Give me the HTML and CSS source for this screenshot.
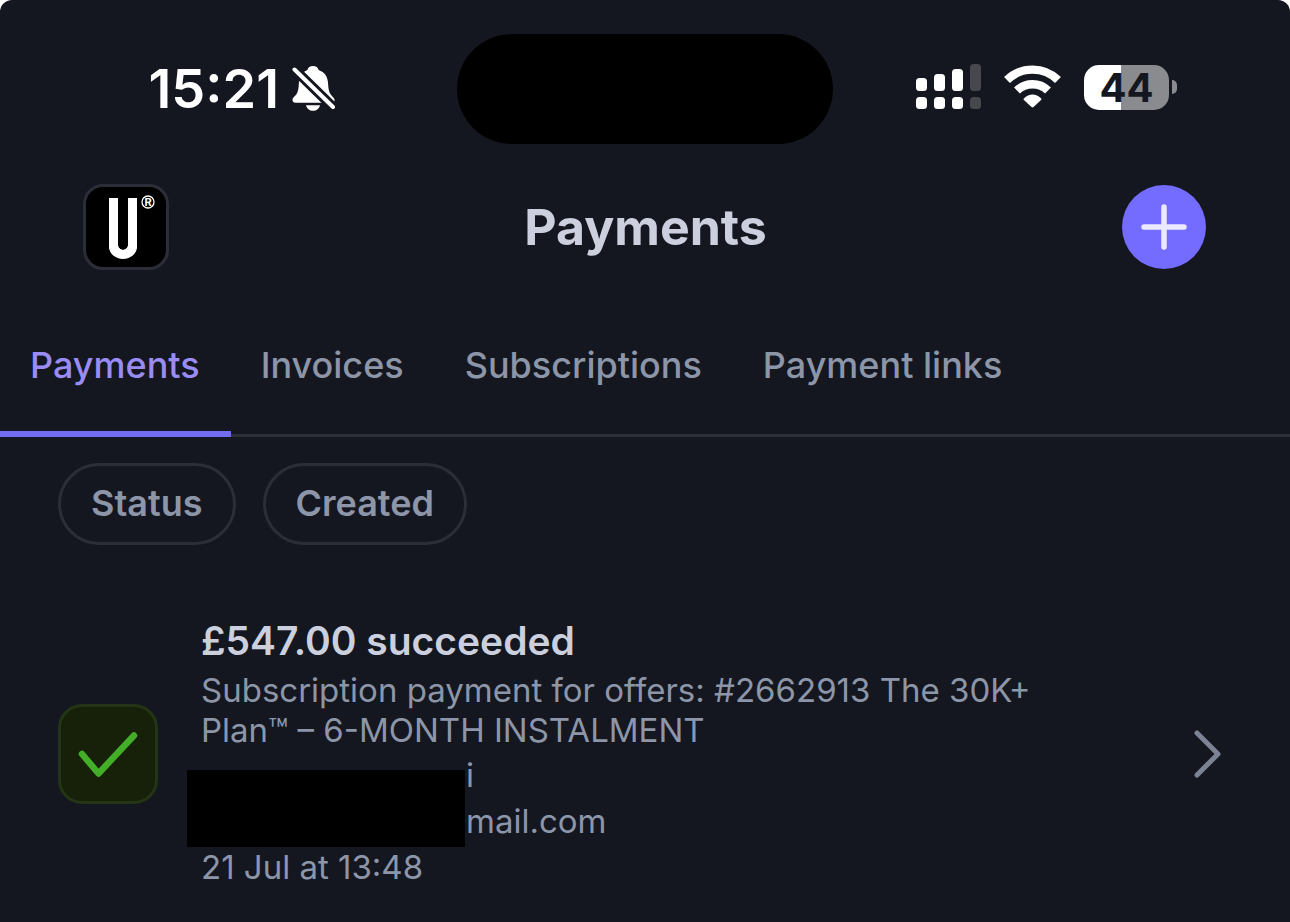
FILE: index.html
```html
<!DOCTYPE html>
<html lang="en">
<head>
<meta charset="utf-8">
<meta name="viewport" content="width=device-width, initial-scale=1">
<title>Payments</title>
<link rel="stylesheet" href="styles.css">
</head>
<body>
<div class="screen">
  <div class="status-bar">
    <div class="status-left">
      <span class="clock">15:21</span>
      <svg class="bell" width="44" height="48" viewBox="0 0 44 48" aria-label="Silent mode">
        <path fill="#fff" d="M22 1c3 0 5 1.600 5.600 4 6 2 9 6.800 9.400 12.500.4 7 1 10.500 4 13.500 1.600 1.600 2.600 2.800 2.600 4.200 0 1.600-1 2.500-2.800 2.500H4.500C2.600 37.700 1.500 36.800 1.500 35c0-1.600 1.200-2.800 2.600-4.200 3-3 3.400-6.500 3.800-13.300C8.300 11.800 11 7 16.400 5 17 2.600 19 1 22 1z"/>
        <path fill="#fff" d="M15 40.200h14c-.8 3.400-3.500 5.600-7 5.600s-6.200-2.200-7-5.600z"/>
        <path stroke="#14171f" stroke-width="10" d="M-1 0L46 46"/>
        <path stroke="#fff" stroke-width="4" stroke-linecap="round" d="M3.500 4.500L42 42"/>
      </svg>
    </div>
    <div class="island"></div>
    <div class="status-right">
      <svg width="66" height="46" viewBox="0 0 66 46" aria-label="Signal">
        <g fill="#fff">
          <rect x="0" y="14" width="11" height="13" rx="3.500"/><rect x="18" y="10" width="11" height="17" rx="3.500"/><rect x="36" y="5" width="11" height="22" rx="3.500"/>
          <rect x="0" y="33" width="11" height="12" rx="3.500"/><rect x="18" y="33" width="11" height="12" rx="3.500"/><rect x="36" y="33" width="11" height="12" rx="3.500"/>
        </g>
        <g fill="#47484d"><rect x="54" y="0" width="11" height="27" rx="3.500"/><rect x="54" y="33" width="11" height="12" rx="3.500"/></g>
      </svg>
      <svg width="58" height="46" viewBox="0 0 58 46" aria-label="Wi-Fi">
        <g fill="none" stroke="#fff" stroke-width="8.400">
          <path d="M3 16A36.500 36.500 0 0 1 54 16"/>
          <path d="M13 26.500A22.300 22.300 0 0 1 44 26.500"/>
        </g>
        <path fill="#fff" d="M19.800 34.500C25 29 32 29 37.200 34.500Q37.800 35.200 37.100 36L29.500 43Q28.500 43.800 27.500 43L19.900 36Q19.200 35.200 19.800 34.500z"/>
      </svg>
      <div class="battery"><span class="level">44</span><span class="cap"></span></div>
    </div>
  </div>

  <header class="header">
    <button class="account" aria-label="Account">
      <svg width="80" height="80" viewBox="1 1 80 80">
        <path d="M28.500 12V59a9.500 9.500 0 0 0 19 0V12" fill="none" stroke="#fff" stroke-width="9"/>
        <path d="M24 56h9v4q1 3 5 4 4-1 5-4v-4h9v5q-1 11-14 11T24 61z" fill="#fff"/>
        <circle cx="63" cy="16" r="6" fill="none" stroke="#fff" stroke-width="1.300"/>
        <text x="63" y="20" class="mark">R</text>
      </svg>
    </button>
    <h1 class="title">Payments</h1>
    <button class="add" aria-label="Create payment">
      <svg width="84" height="84" viewBox="0 0 84 84"><path d="M42 22V62M22 42H62" stroke="#ebe9ff" stroke-width="5.500" stroke-linecap="round"/></svg>
    </button>
  </header>

  <nav class="tabs">
    <a class="tab active" href="#payments">Payments</a>
    <a class="tab" href="#invoices">Invoices</a>
    <a class="tab" href="#subscriptions">Subscriptions</a>
    <a class="tab" href="#links">Payment links</a>
  </nav>

  <div class="filters">
    <button class="chip">Status</button>
    <button class="chip">Created</button>
  </div>

  <main>
    <article class="payment">
      <div class="state">
        <svg width="92" height="92" viewBox="0 0 92 92" aria-label="Succeeded"><path d="M20 46L36.500 65.500L72 27.500" fill="none" stroke="#43ae27" stroke-width="6.500" stroke-linecap="round" stroke-linejoin="round"/></svg>
      </div>
      <div class="details">
        <h2 class="amount">£547.00 succeeded</h2>
        <p class="description">Subscription payment for offers: #2662913 The 30K+ Plan™ – 6-MONTH INSTALMENT</p>
        <div class="contact">
          <p class="line masked">i</p>
          <p class="line masked">mail.com</p>
          <span class="redaction"></span>
        </div>
        <p class="line">21 Jul at 13:48</p>
      </div>
      <svg class="chevron" width="30" height="52" viewBox="0 0 30 52" aria-hidden="true"><path d="M4 5L25 26L4 47" fill="none" stroke="#7b8294" stroke-width="5" stroke-linecap="round" stroke-linejoin="round"/></svg>
    </article>
  </main>
</div>
</body>
</html>
```
FILE: styles.css
```css
* { box-sizing: border-box; }
body {
  margin: 0;
  background: #fff;
  font-family: Inter, "Liberation Sans", sans-serif;
}
h1, h2, p { margin: 0; }
button {
  font: inherit;
  padding: 0;
  cursor: pointer;
}
svg { display: block; flex: none; }
.screen {
  min-height: 100vh;
  overflow: hidden;
  background: #14171f;
  border-radius: 12px 12px 0 0;
  color: #8d95a8;
}
.status-bar {
  display: grid;
  grid-template-columns: 1fr 376px 1fr;
  align-items: center;
  padding-top: 34px;
}
.status-left {
  display: flex;
  align-items: center;
  justify-content: flex-end;
  gap: 12px;
  padding-right: 122px;
}
.clock {
  color: #fff;
  font-size: 54px;
  font-weight: 600;
  line-height: 60px;
}
.island {
  height: 110px;
  border-radius: 55px;
  background: #000;
}
.status-right {
  display: flex;
  align-items: center;
  gap: 22px;
  padding: 0 0 4px 83px;
}
.battery {
  display: flex;
  align-items: center;
  gap: 3px;
}
.level {
  width: 85px;
  height: 45px;
  border-radius: 15px;
  background: linear-gradient(90deg, #fff 44%, #8a8b8f 44%);
  color: #14171f;
  font-size: 40px;
  font-weight: 700;
  line-height: 45px;
  text-align: center;
}
.cap {
  width: 5px;
  height: 14px;
  border-radius: 0 6px 6px 0;
  background: #8a8b8f;
}
.header {
  display: flex;
  align-items: center;
  justify-content: space-between;
  padding: 40px 84px 0 83px;
}
.account {
  width: 86px;
  height: 86px;
  border: 3px solid #2b2d38;
  border-radius: 20px;
  background: #000;
  overflow: hidden;
}
.mark {
  fill: #fff;
  font-size: 11px;
  font-weight: 700;
  text-anchor: middle;
}
.title {
  color: #cccfdd;
  font-size: 50px;
  font-weight: 700;
  line-height: 60px;
}
.add {
  width: 84px;
  height: 84px;
  border: 0;
  border-radius: 50%;
  background: #746cff;
}
.tabs {
  display: flex;
  margin-top: 61px;
  box-shadow: inset 0 -3px #2d3039;
}
.tab {
  padding: 9px 31px 40px 30px;
  border-bottom: 6px solid transparent;
  color: #8d95a8;
  font-size: 36px;
  font-weight: 500;
  line-height: 51px;
  text-decoration: none;
}
.tab.active {
  border-bottom-color: #746cf0;
  color: #9a8cf5;
}
.filters {
  display: flex;
  gap: 27px;
  padding: 26px 58px 0;
}
.chip {
  height: 82px;
  padding: 0 30px 2px;
  border: 3px solid #2b2e37;
  border-radius: 41px;
  background: transparent;
  color: #8d95a8;
  font-size: 36px;
  font-weight: 600;
}
.payment {
  display: flex;
  align-items: center;
  padding: 72px 67px 30px 58px;
}
.state {
  flex: none;
  width: 100px;
  height: 100px;
  padding: 1px;
  border: 3px solid #233515;
  border-radius: 24px;
  background: #172009;
}
.details {
  flex: 1;
  margin-left: 43px;
  padding-right: 120px;
}
.amount {
  margin-bottom: 5px;
  color: #cccfdd;
  font-size: 39px;
  font-weight: 600;
  line-height: 48px;
}
.description {
  margin-bottom: 2px;
  font-size: 33px;
  line-height: 40px;
}
.line {
  font-size: 33px;
  line-height: 46px;
}
.contact { position: relative; }
.masked { padding-left: 265px; }
.redaction {
  position: absolute;
  top: 18px;
  left: -14px;
  width: 278px;
  height: 77px;
  background: #000;
}
```
